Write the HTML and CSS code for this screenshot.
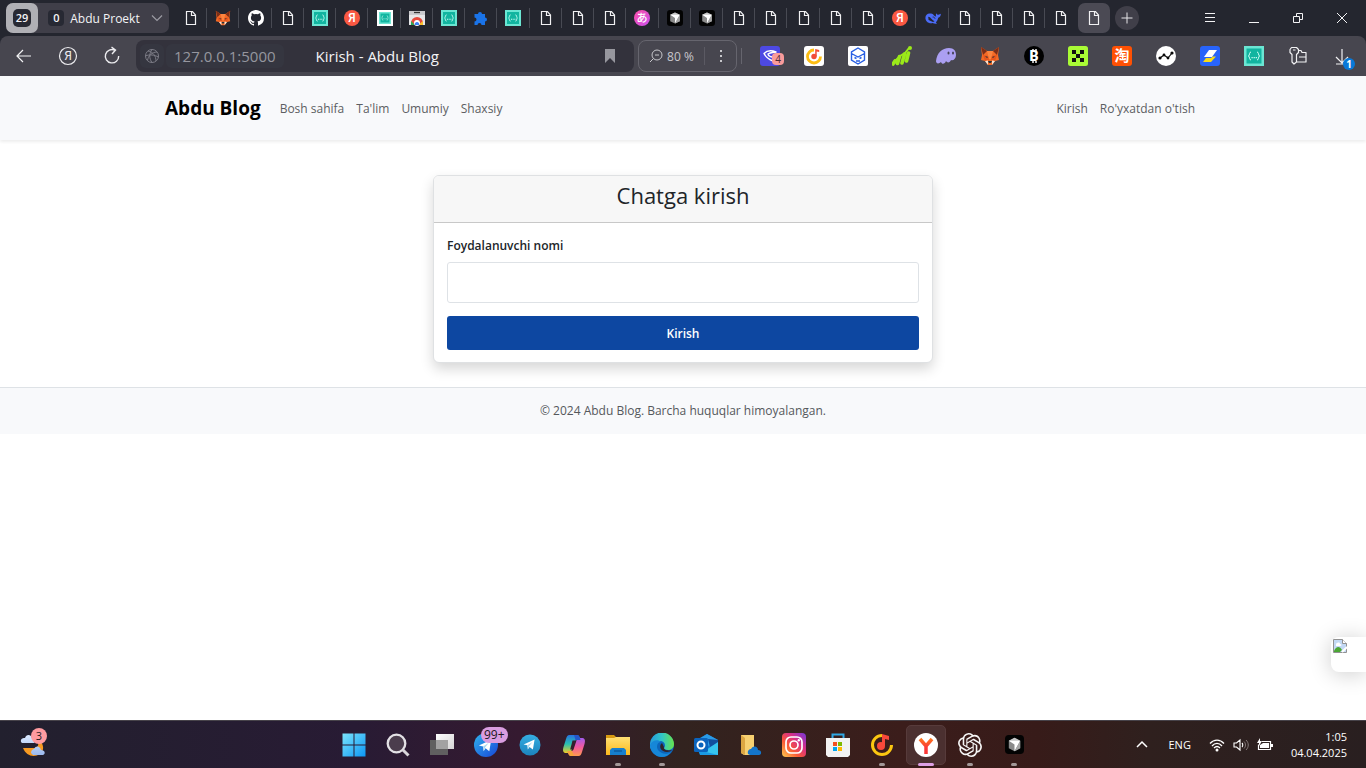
FILE: index.html
```html
<!DOCTYPE html>
<html lang="uz">
<head>
<meta charset="utf-8">
<meta name="viewport" content="width=device-width, initial-scale=1">
<title>Kirish - Abdu Blog</title>
<link rel="stylesheet" href="styles.css">
</head>
<body>
<svg class="sprite" aria-hidden="true">
  <defs>
    <linearGradient id="g-win" x1="0" y1="0" x2="1" y2="1"><stop offset="0" stop-color="#7be4fb"/><stop offset="1" stop-color="#0c97f5"/></linearGradient>
    <linearGradient id="g-lang" x1="0" y1="0" x2="1" y2="1"><stop offset="0" stop-color="#fb4fa5"/><stop offset="1" stop-color="#cb4ff0"/></linearGradient>
    <linearGradient id="g-tg" x1="0" y1="0" x2="0" y2="1"><stop offset="0" stop-color="#35aee2"/><stop offset="1" stop-color="#1c83bd"/></linearGradient>
    <linearGradient id="g-tg2" x1="0" y1="0" x2="1" y2="1"><stop offset="0" stop-color="#30b4ed"/><stop offset="1" stop-color="#1746d8"/></linearGradient>
    <linearGradient id="g-folder" x1="0" y1="0" x2="0" y2="1"><stop offset="0" stop-color="#ffe074"/><stop offset="1" stop-color="#fbb91c"/></linearGradient>
    <linearGradient id="g-edge" x1="0" y1="0" x2="1" y2="0"><stop offset="0" stop-color="#2599dc"/><stop offset=".5" stop-color="#31c6c7"/><stop offset="1" stop-color="#67e34b"/></linearGradient>
    <linearGradient id="g-ig" x1="0" y1="1" x2="1" y2="0"><stop offset="0" stop-color="#ffcf50"/><stop offset=".35" stop-color="#fa5a35"/><stop offset=".65" stop-color="#d82f85"/><stop offset="1" stop-color="#7138dd"/></linearGradient>
    <linearGradient id="g-cop1" x1="0" y1="0" x2="0" y2="1"><stop offset="0" stop-color="#2873e0"/><stop offset=".5" stop-color="#29c0b0"/><stop offset="1" stop-color="#efcf26"/></linearGradient>
    <linearGradient id="g-cop2" x1="0" y1="0" x2="0" y2="1"><stop offset="0" stop-color="#a35bec"/><stop offset=".5" stop-color="#f2599e"/><stop offset="1" stop-color="#ff9a4f"/></linearGradient>
    <linearGradient id="g-tv" x1="0" y1="0" x2="1" y2="1"><stop offset="0" stop-color="#fdfdfd"/><stop offset="1" stop-color="#d5d5d5"/></linearGradient>
    <linearGradient id="g-cloud" x1="0" y1="0" x2="0" y2="1"><stop offset="0" stop-color="#dceaff"/><stop offset="1" stop-color="#9ab8ed"/></linearGradient>
    <linearGradient id="g-y" gradientUnits="userSpaceOnUse" x1="0" y1="5" x2="0" y2="21"><stop offset="0" stop-color="#ff7a1c"/><stop offset=".6" stop-color="#fa3838"/></linearGradient>
  </defs>
  <symbol id="page" viewBox="0 0 16 16"><path d="M3.5 1.5h6l3 3.500v9.500h-9zM8.500 1.500v4h4" fill="none" stroke="#f1f1f3" stroke-width="1.200"/></symbol>
  <symbol id="fox" viewBox="0 0 20 20"><path d="M1 1l6 4h6l6-4-1 8 1 5-4 1-3 4H8l-3-4-4-1 1-5z" fill="#f36a26"/><path d="M1 1l6 4-4 4zM19 1l-6 4 4 4z" fill="#7b2e18"/><path d="M7 5h6l-2 8H9z" fill="#fb8540"/><path d="M3 9l5 1 1 4-4 1zM17 9l-5 1-1 4 4 1z" fill="#e8551b"/><path d="M5 10l3 1-1 1zM15 10l-3 1 1 1zM8 15h4l-1 2H9z" fill="#22313c"/><path d="M5 15l3-.5V19zM15 15l-3-.5V19z" fill="#f7e3d2"/></symbol>
  <symbol id="github" viewBox="0 0 16 16"><path fill="#fff" d="M8 0C3.580 0 0 3.580 0 8c0 3.540 2.290 6.530 5.470 7.590.4.070.55-.17.55-.38v-1.340c-2.230.48-2.690-1.070-2.690-1.070-.36-.92-.89-1.170-.89-1.170-.73-.5.050-.49.050-.49.8.060 1.230.83 1.230.83.72 1.220 1.870.87 2.330.66.070-.52.280-.87.500-1.070-1.770-.2-3.640-.89-3.640-3.950 0-.87.310-1.590.82-2.150-.08-.2-.36-1.020.08-2.120 0 0 .67-.21 2.200.82a7.600 7.600 0 0 1 4 0c1.530-1.040 2.200-.82 2.200-.82.44 1.100.16 1.920.08 2.120.51.56.82 1.270.82 2.150 0 3.070-1.870 3.750-3.650 3.950.29.25.54.73.54 1.480v2.200c0 .21.15.46.55.38A8 8 0 0 0 16 8c0-4.420-3.580-8-8-8z"/></symbol>
  <symbol id="braces" viewBox="0 0 20 20"><path fill="#6be6d3" d="M0 0h20v20H0z"/><path fill="#12b5a0" d="M2.500 2.500h15v15h-15z"/><path d="M7 6c-2 0-1 3-2.500 4C6 11 5 14 7 14M13 6c2 0 1 3 2.500 4-1.500 1-.5 4-2.500 4" fill="none" stroke="#d5fff7"/><path d="M7.500 11h1.200v1.200H7.500zM9.600 11h1.200v1.200H9.600zM11.700 11h1.200v1.200h-1.200z" fill="#d5fff7"/></symbol>
  <symbol id="braces-white" viewBox="0 0 16 16"><path fill="#fff" d="M0 0h16v16H0z"/><use href="#braces" x="2" y="2" width="12" height="12"/></symbol>
  <symbol id="webstore" viewBox="0 0 16 16"><path fill="#e6e6e8" d="M0 1h16v14H0z"/><path fill="#c9c9cd" d="M0 1h16v4H0z"/><path d="M5 2.500h6" stroke="#333" stroke-width="1.300"/><path d="M2 13a6 6 0 0 1 12 0v2H2z" fill="#e5483b"/><path d="M2 11l4 4H2z" fill="#2ca952"/><path d="M14 11v4h-5z" fill="#fac12c"/><circle cx="8" cy="13" r="3" fill="#fff"/><path d="M5.800 15a2.300 2.300 0 1 1 4.400 0z" fill="#3c82f6"/></symbol>
  <symbol id="puzzle" viewBox="0 0 16 16"><path fill="#1a73e8" d="M1.500 4H5a2 2 0 1 1 4 0h3v3.500a2 2 0 1 1 0 4V15H8.500a2 2 0 0 0-4 0h-3v-3.500a2 2 0 0 0 0-4z"/></symbol>
  <symbol id="cube" viewBox="0 0 20 20"><rect width="20" height="20" rx="4" fill="#030303"/><path d="M10 3l6 3v8l-6 3-6-3V6z" fill="#8a8a8a"/><path d="M4 6l6-3 6 3-6 1z" fill="#c6c6c6"/><path d="M4 6h12l-6 11v-7z" fill="#fff"/><path d="M16 6v8l-6 3z" fill="#a5a5a5"/></symbol>
  <symbol id="whale" viewBox="0 0 20 20"><path d="M.5 10c0-4 3-6 6-5.500 2-.8 3.500.5 4.500 2 1 1 2 1.500 3 1.500-.8-1.500-.5-3 .3-4 .5 1.200 1.200 2 2.500 2 1-.1 2-.8 3-1.200 0 2.800-1.300 4.500-3.300 5-.5 2.700-1.700 4.700-3 5.700l1.500 1.500c-2 .8-4 0-5.500-.7C5 17.500.500 14.500.500 10z" fill="#4b6cf7"/><path d="M4 8.500c3 0 5 4.500 8 5.500l-2 1c-2-.5-3.500-2-5.500-2.500z" fill="#24262f"/><path d="M9.500 8.800c1.500-.3 3 .7 3 2.200" stroke="#24262f" fill="none"/></symbol>
  <symbol id="gem" viewBox="0 0 20 20"><rect width="20" height="20" rx="3" fill="#4d49e3"/><path d="M16 6c-4-1.500-9-1.500-12 1.500 2 4 5 6 9 7.500 1-1 2-2 3-4-4 .5-8-.5-8-3 2-1.500 5-1.500 8-2z" fill="none" stroke="#fff" stroke-width="1.500" stroke-linejoin="round"/></symbol>
  <symbol id="music" viewBox="0 0 20 20"><rect width="20" height="20" rx="3" fill="#fff"/><path d="M10 4a6.500 6.500 0 1 0 6.500 6.500" fill="none" stroke="#fdbd13" stroke-width="2.800"/><circle cx="10" cy="10.500" r="2.700" fill="#f24c37"/><path d="M11.200 10V3l4 1v2l-2.500-.5v5z" fill="#f24c37"/></symbol>
  <symbol id="hex" viewBox="0 0 20 20"><rect width="20" height="20" rx="2" fill="#fff"/><path d="M10 2l6.500 3.800v8.400L10 18l-6.500-3.800V5.800zM3.500 7.500L10 11l6.500-3.500M6.500 11.500l2 1M13.500 11.500l-2 1M8 15h4" fill="none" stroke="#285fe4" stroke-width="1.400"/></symbol>
  <symbol id="bars" viewBox="0 0 20 20"><path d="M1 18l2-3M5.500 17.500l2-7M10 17l2.500-9M14.500 15l2-8" stroke="#9bea19" stroke-width="3.600" stroke-linecap="round"/><path d="M2 16l6-6 5-3 4-5" stroke="#9bea19" stroke-width="2" fill="none"/><circle cx="18" cy="2" r="2" fill="#9bea19"/></symbol>
  <symbol id="ghost" viewBox="0 0 20 20"><path d="M0 15C1 7 6 2 13 2c5 0 7 3 7 7s-3 6-5 5c-1 3-4 3-5 1-1 3-4 4-5 1-2 2-5 2-5-1z" fill="#ab9ff2"/><ellipse cx="12.500" cy="7" rx="1" ry="1.500" fill="#454257"/><ellipse cx="17" cy="7" rx="1" ry="1.500" fill="#454257"/></symbol>
  <symbol id="okx" viewBox="0 0 20 20"><rect width="20" height="20" rx="2.500" fill="#a9fb35"/><path d="M4 4h4v4H4zM12 4h4v4h-4zM8 8h4v4H8zM4 12h4v4H4zM12 12h4v4h-4z" fill="#111"/></symbol>
  <symbol id="nodes" viewBox="0 0 20 20"><circle cx="10" cy="10" r="10" fill="#fff"/><path d="M4 12l4-3 4 3 4-5" fill="none" stroke="#090909" stroke-width="1.200"/><g fill="#090909"><circle cx="4" cy="12" r="1.600"/><circle cx="8" cy="9" r="1.400"/><circle cx="12" cy="12" r="1.400"/><circle cx="16" cy="7" r="1.600"/></g></symbol>
  <symbol id="bolt" viewBox="0 0 20 20"><rect width="20" height="20" rx="3" fill="#2864fa"/><path d="M9 4h8l-5 7H4z" fill="#fff"/><path d="M12.500 10.500H16L11 16H3l3-4h5z" fill="#f6db18"/></symbol>
  <symbol id="key" viewBox="0 0 20 20"><path d="M3.500 1.500h5l2 2v3l-2 2V16L6 18l-2-2V8.500l-2-2v-3zM5 4h2.500M10.500 4.500H13l1 2h4v9.500H8.500M11 11h7" fill="none" stroke="#f1f1f3" stroke-width="1.200" stroke-linejoin="round"/></symbol>
  <symbol id="plane" viewBox="0 0 20 20"><path d="M3 10l13-6-2 12-4-3-2 3-.5-5z" fill="#fff"/><path d="M7.500 11l6-4-4 5-1 3z" fill="#a9d8ef"/></symbol>
</svg>

<div class="screen">
  <header class="browser">
    <div class="strip">
      <div class="group">
        <button class="count" aria-label="29 ta varaq"><span>29</span></button>
        <button class="project"><span class="zero">0</span>Abdu Proekt
          <svg class="caret" viewBox="0 0 12 8"><path d="M1 1.500l5 5 5-5" fill="none" stroke="#9b9ba3" stroke-width="1.200"/></svg></button>
      </div>
      <nav class="tabs" aria-label="Varaqlar">
        <button class="tab"><svg><use href="#page"/></svg></button>
        <button class="tab"><svg><use href="#fox"/></svg></button>
        <button class="tab"><svg><use href="#github"/></svg></button>
        <button class="tab"><svg><use href="#page"/></svg></button>
        <button class="tab"><svg><use href="#braces"/></svg></button>
        <button class="tab"><svg viewBox="0 0 16 16"><circle cx="8" cy="8" r="8" fill="#fa5842"/><text x="8" y="12" text-anchor="middle" class="glyph" font-size="12" fill="#fff">Я</text></svg></button>
        <button class="tab"><svg><use href="#braces-white"/></svg></button>
        <button class="tab"><svg><use href="#webstore"/></svg></button>
        <button class="tab"><svg><use href="#braces"/></svg></button>
        <button class="tab"><svg><use href="#puzzle"/></svg></button>
        <button class="tab"><svg><use href="#braces"/></svg></button>
        <button class="tab"><svg><use href="#page"/></svg></button>
        <button class="tab"><svg><use href="#page"/></svg></button>
        <button class="tab"><svg><use href="#page"/></svg></button>
        <button class="tab"><svg viewBox="0 0 16 16"><circle cx="8" cy="8" r="8" fill="url(#g-lang)"/><text x="8" y="12" text-anchor="middle" class="glyph" font-size="11" fill="#fff">あ</text></svg></button>
        <button class="tab"><svg><use href="#cube"/></svg></button>
        <button class="tab"><svg><use href="#cube"/></svg></button>
        <button class="tab"><svg><use href="#page"/></svg></button>
        <button class="tab"><svg><use href="#page"/></svg></button>
        <button class="tab"><svg><use href="#page"/></svg></button>
        <button class="tab"><svg><use href="#page"/></svg></button>
        <button class="tab"><svg><use href="#page"/></svg></button>
        <button class="tab"><svg viewBox="0 0 16 16"><circle cx="8" cy="8" r="8" fill="#fa5842"/><text x="8" y="12" text-anchor="middle" class="glyph" font-size="12" fill="#fff">Я</text></svg></button>
        <button class="tab"><svg><use href="#whale"/></svg></button>
        <button class="tab"><svg><use href="#page"/></svg></button>
        <button class="tab"><svg><use href="#page"/></svg></button>
        <button class="tab"><svg><use href="#page"/></svg></button>
        <button class="tab"><svg><use href="#page"/></svg></button>
        <button class="tab active"><svg><use href="#page"/></svg></button>
      </nav>
      <button class="newtab" aria-label="Yangi varaq"><svg viewBox="0 0 12 12"><path d="M6 .5v11M.5 6h11" stroke="#e6e6e9"/></svg></button>
      <div class="window">
        <button aria-label="Menyu"><svg viewBox="0 0 12 12"><path d="M1 1.500h10M1 5.500h10M1 9.500h10" stroke="#f3f3f5"/></svg></button>
        <button aria-label="Yig'ish"><svg viewBox="0 0 12 12"><path d="M1 10.500h10" stroke="#f3f3f5"/></svg></button>
        <button aria-label="Kichraytirish"><svg viewBox="0 0 12 12"><path d="M1.500 4.500h6v6h-6zM4.500 4.500v-3h6v6h-3" fill="none" stroke="#f3f3f5"/></svg></button>
        <button aria-label="Yopish"><svg viewBox="0 0 12 12"><path d="M1 1l10 10M11 1L1 11" stroke="#f3f3f5"/></svg></button>
      </div>
    </div>

    <div class="toolbar">
      <div class="tools">
        <button aria-label="Orqaga"><svg viewBox="0 0 20 20"><path d="M17 10H3.500M9 4l-6 6 6 6" fill="none" stroke="#f3f3f5" stroke-width="1.200"/></svg></button>
        <button aria-label="Yandex"><svg viewBox="0 0 20 20"><circle cx="10" cy="10" r="8.500" fill="none" stroke="#ececef" stroke-width="1.200"/><text x="10" y="14" text-anchor="middle" class="glyph light" font-size="12" fill="#ececef">Я</text></svg></button>
        <button aria-label="Yangilash"><svg viewBox="0 0 20 20"><path d="M13 4.200A6.700 6.700 0 1 0 16.700 10M9.500 1l4 3-3.500 4" fill="none" stroke="#ececef" stroke-width="1.400"/></svg></button>
      </div>
      <div class="address">
        <span class="site"><svg viewBox="0 0 16 16"><g fill="none" stroke="#7c7c86"><circle cx="8" cy="8" r="6.500"/><path d="M4 3c5 1 8 5 8 10M13 4C8 4 4 8 3.500 12.500M1.500 8c4-2 9-1 13 1M8 1.500c-3 4-3 9 0 13"/></g></svg></span>
        <span class="host">127.0.0.1:5000</span>
        <span class="title">Kirish - Abdu Blog</span>
        <button class="mark" aria-label="Saqlash"><svg viewBox="0 0 12 14"><path d="M1 0h10v14l-5-5-5 5z" fill="#97979e"/></svg></button>
      </div>
      <div class="zoom">
        <button class="level"><svg viewBox="0 0 14 14"><circle cx="8" cy="6" r="5" fill="none" stroke="#c7c7cb"/><path d="M4.500 9.500L1 13M6 6h4" stroke="#c7c7cb"/></svg>80 %</button>
        <button class="more" aria-label="Yana"><svg viewBox="0 0 4 14"><path d="M1 1h2v2H1zM1 6h2v2H1zM1 11h2v2H1z" fill="#c7c7cb"/></svg></button>
      </div>
      <div class="extensions">
        <button><svg><use href="#gem"/></svg><span class="tip">4</span></button>
        <button><svg><use href="#music"/></svg></button>
        <button><svg><use href="#hex"/></svg></button>
        <button><svg><use href="#bars"/></svg></button>
        <button><svg><use href="#ghost"/></svg></button>
        <button><svg><use href="#fox"/></svg></button>
        <button><svg viewBox="0 0 20 20"><circle cx="10" cy="10" r="10" fill="#000"/><text x="10" y="15" text-anchor="middle" class="glyph heavy" font-size="14" fill="#fff">B</text><path d="M9 3v2M12 3v2M9 15v2M12 15v2" stroke="#fff" stroke-width="1.400"/></svg></button>
        <button><svg><use href="#okx"/></svg></button>
        <button><svg viewBox="0 0 20 20"><rect width="20" height="20" rx="3" fill="#ff5104"/><text x="10" y="15" text-anchor="middle" class="glyph cjk" font-size="15" fill="#fff">淘</text></svg></button>
        <button><svg><use href="#nodes"/></svg></button>
        <button><svg><use href="#bolt"/></svg></button>
        <button><svg><use href="#braces"/></svg></button>
        <button><svg><use href="#key"/></svg></button>
        <button><svg viewBox="0 0 20 20"><path d="M10 3v14M4 11l6 6 6-6M4 18h8" fill="none" stroke="#f1f1f3" stroke-width="1.200"/></svg><span class="tip blue">1</span></button>
      </div>
    </div>
  </header>

  <div class="viewport">
    <nav class="navbar">
      <div class="container">
        <a class="brand" href="#">Abdu Blog</a>
        <div class="links"><a href="#">Bosh sahifa</a><a href="#">Ta'lim</a><a href="#">Umumiy</a><a href="#">Shaxsiy</a></div>
        <div class="links end"><a href="#">Kirish</a><a href="#">Ro'yxatdan o'tish</a></div>
      </div>
    </nav>
    <main class="main">
      <section class="card">
        <h1 class="card-title">Chatga kirish</h1>
        <form class="card-body">
          <label for="username">Foydalanuvchi nomi</label>
          <input id="username" type="text" name="username">
          <button type="button" class="submit">Kirish</button>
        </form>
      </section>
    </main>
    <footer class="footer">© 2024 Abdu Blog. Barcha huquqlar himoyalangan.</footer>
    <div class="widget"><svg viewBox="0 0 14 14"><path d="M.5.500h9l4 4v9H.500z" fill="#c3d9f5" stroke="#929292"/><path d="M9.500.500v4h4" fill="#fff" stroke="#929292"/><path d="M3 6c0-3 4-3 4-1 2 0 2 2 0 2H3z" fill="#fff"/><path d="M1 12c2-5 6-5 8-1l-2 2H1z" fill="#4ba735"/><path d="M14 8l-5 5" stroke="#fff" stroke-width="2"/></svg></div>
  </div>

  <footer class="taskbar">
    <div class="weather">
      <svg viewBox="0 0 26 24"><path d="M3 15h11c5 0 5-5 3-8 7 2 8 10 3 14-6 4-14 2-17-6z" fill="#f79a22"/><path d="M1 9c-1-4 3-4 4-4 1-4 6-4 7 0 4 0 4 4 2 5H2zM11 20c0-3 2-4 3-4 2-4 6-3 7 1 4 0 5 4 2 5H13z" fill="url(#g-cloud)"/></svg>
      <span class="alert">3</span>
    </div>
    <div class="apps">
      <button aria-label="Windows"><svg viewBox="0 0 24 24"><path d="M.5.500h11v11H.500zM12.500.500h11v11h-11zM.500 12.500h11v11H.500zM12.500 12.500h11v11h-11z" fill="url(#g-win)"/></svg></button>
      <button aria-label="Qidiruv"><svg viewBox="0 0 24 24"><circle cx="10.500" cy="10.500" r="8.800" fill="#4b3d4d" stroke="#e3e1e5" stroke-width="2.300"/><path d="M17 17l5.500 5.500" stroke="#d9d6db" stroke-width="3"/></svg></button>
      <button aria-label="Vazifalar"><svg viewBox="0 0 24 24"><path d="M6 1h18v15H6z" fill="url(#g-tv)"/><path d="M0 7h18v15H0z" fill="#606060"/><path d="M6 7h12v9H6z" fill="#a2a2a2"/></svg></button>
      <button aria-label="Telegram"><svg viewBox="0 0 24 24"><circle cx="12" cy="12" r="12" fill="url(#g-tg2)"/><use href="#plane" x="2" y="3" width="19" height="19"/></svg><span class="unread">99+</span></button>
      <button aria-label="Telegram"><svg viewBox="0 0 24 24"><circle cx="12" cy="12" r="10.500" fill="url(#g-tg)"/><use href="#plane" x="3" y="3" width="17" height="17"/></svg></button>
      <button aria-label="Copilot"><svg viewBox="0 0 24 24"><path d="M7.500 2H15c2 0 2.500 1.500 3.500 5H15c-2 0-2.500 1-3 3l-2 6c-.7 2.500-1.500 4-4 4H4c-3 0-3.500-2.500-2.500-6L4 6c.8-2.500 1.500-4 3.500-4z" fill="url(#g-cop1)"/><path d="M16.500 23H9c-2 0-2.500-1.500-3.500-5H9c2 0 2.500-1 3-3l2-6c.7-2.500 1.500-4 4-4h2c3 0 3.500 2.500 2.500 6L20 19c-.8 2.500-1.500 4-3.500 4z" fill="url(#g-cop2)"/><path d="M10.500 7.500h2.700l-2.300 9H8.200z" fill="#35202d"/><path d="M12 2h3c2 0 2.500 1.500 3.500 5h-5z" fill="#2456ca"/><path d="M5.500 18H10l2 5H9c-2 0-2.500-1.500-3.500-5z" fill="#f5a33a"/></svg></button>
      <button aria-label="Fayllar" class="run"><svg viewBox="0 0 24 24"><path d="M0 2h8l3 3v5H0z" fill="#d79a11"/><path d="M0 5h8l2-1h14v18H0z" fill="url(#g-folder)"/><path d="M4 22v-5l2-2h12l2 2v5z" fill="#167fce"/><path d="M8 18h8" stroke="#0c5ba1" stroke-width="1.500"/></svg></button>
      <button aria-label="Edge" class="run"><svg viewBox="0 0 24 24"><circle cx="12" cy="12" r="12" fill="#0c65bb"/><path d="M0 12a12 12 0 0 1 24-1c0 4-3 6-6 6-3 0-4-1-4-2 2-2 1-7-4-7C5 8 2 12 0 16z" fill="url(#g-edge)"/><path d="M0 12c2-5 8-6 11-3-4 0-5 5-3 8 3 4 9 5 13 2-2 3-6 5-9 5C5 24 0 18 0 12z" fill="#1687d8"/><path d="M12 10c-4 3-1 9 5 9 2 0 4-1 5-2-4 1-9 0-8-3z" fill="#30242a"/></svg></button>
      <button aria-label="Outlook"><svg viewBox="0 0 24 24"><path d="M4 6l9-5 11 6v15H6z" fill="#1478cf"/><path d="M5 6l8-5 11 6-9 6z" fill="#2a9be6"/><path d="M14 6l10 1v3l-8 4z" fill="#124f9e"/><path d="M24 9v13H6l9-7z" fill="#36c5ef"/><path d="M4 17l20 5H6z" fill="#1a9ae4"/><rect y="5" width="14" height="14" rx="1.500" fill="#0b64bd"/><circle cx="7" cy="12" r="3.500" fill="none" stroke="#fff" stroke-width="2"/></svg></button>
      <button aria-label="OneDrive"><svg viewBox="0 0 24 24"><path d="M3 2h13v20H6l-3-2z" fill="#f7d071"/><path d="M3 2l4 3v17l-4-2z" fill="#dca642"/><path d="M10 21c-1-4 2-5 3-5 2-4 7-3 7 1 4 0 4 5 1 5H12z" fill="#1475cb"/></svg></button>
      <button aria-label="Instagram"><svg viewBox="0 0 24 24"><rect width="24" height="24" rx="4" fill="url(#g-ig)"/><rect x="4" y="4" width="16" height="16" rx="5" fill="none" stroke="#fff" stroke-width="1.700"/><circle cx="12" cy="12" r="4" fill="none" stroke="#fff" stroke-width="1.700"/><circle cx="16.800" cy="7.200" r="1.200" fill="#fff"/></svg></button>
      <button aria-label="Store"><svg viewBox="0 0 24 24"><path d="M6.500 7V1.500h11V7" fill="none" stroke="#31a9e6" stroke-width="2"/><path d="M0 5h24v17l-2 2H2l-2-2z" fill="#f2f2f2"/><path d="M7 9h4v4H7z" fill="#f25022"/><path d="M12 9h4v4h-4z" fill="#7fba00"/><path d="M7 14h4v4H7z" fill="#00a4ef"/><path d="M12 14h4v4h-4z" fill="#ffb900"/></svg></button>
      <button aria-label="Musiqa" class="run"><svg viewBox="0 0 24 24"><path d="M12 2.500a9.500 9.500 0 1 0 9.500 9.500" fill="none" stroke="#fbc711" stroke-width="3"/><circle cx="11" cy="13" r="4" fill="#f8493b"/><path d="M12 13V1l7 2v4l-4-1v7z" fill="#f8493b"/></svg></button>
      <button aria-label="Yandex" class="run current"><svg viewBox="0 0 24 24"><circle cx="12" cy="12" r="12" fill="#fff"/><path d="M6 6l6 7 6-7M12 12v9" fill="none" stroke="url(#g-y)" stroke-width="3.500"/></svg></button>
      <button aria-label="ChatGPT" class="run"><svg viewBox="0 0 24 24"><path fill="#f6f6f6" d="M22.2819 9.8211a5.9847 5.9847 0 0 0-.5157-4.9108 6.0462 6.0462 0 0 0-6.5098-2.9A6.0651 6.0651 0 0 0 4.9807 4.1818a5.9847 5.9847 0 0 0-3.9977 2.9 6.0462 6.0462 0 0 0 .7427 7.0966 5.98 5.98 0 0 0 .511 4.9107 6.051 6.051 0 0 0 6.5146 2.9001A5.9847 5.9847 0 0 0 13.2599 24a6.0557 6.0557 0 0 0 5.7718-4.2058 5.9894 5.9894 0 0 0 3.9977-2.9001 6.0557 6.0557 0 0 0-.7475-7.0729zm-9.022 12.6081a4.4755 4.4755 0 0 1-2.8764-1.0408l.1419-.0804 4.7783-2.7582a.7948.7948 0 0 0 .3927-.6813v-6.7369l2.02 1.1686a.071.071 0 0 1 .038.052v5.5826a4.504 4.504 0 0 1-4.4945 4.4944zm-9.6607-4.1254a4.4708 4.4708 0 0 1-.5346-3.0137l.142.0852 4.783 2.7582a.7712.7712 0 0 0 .7806 0l5.8428-3.3685v2.3324a.0804.0804 0 0 1-.0332.0615L9.74 19.9502a4.4992 4.4992 0 0 1-6.1408-1.6464zM2.3408 7.8956a4.485 4.485 0 0 1 2.3655-1.9728V11.6a.7664.7664 0 0 0 .3879.6765l5.8144 3.3543-2.0201 1.1685a.0757.0757 0 0 1-.071 0l-4.8303-2.7865A4.504 4.504 0 0 1 2.3408 7.872zm16.5963 3.8558L13.1038 8.364 15.1192 7.2a.0757.0757 0 0 1 .071 0l4.8303 2.7913a4.4944 4.4944 0 0 1-.6765 8.1042v-5.6772a.79.79 0 0 0-.407-.667zm2.0107-3.0231l-.142-.0852-4.7735-2.7818a.7759.7759 0 0 0-.7854 0L9.409 9.2297V6.8974a.0662.0662 0 0 1 .0284-.0615l4.8303-2.7866a4.4992 4.4992 0 0 1 6.6802 4.66zM8.3065 12.863l-2.02-1.1638a.0804.0804 0 0 1-.038-.0567V6.0742a4.4992 4.4992 0 0 1 7.3757-3.4537l-.142.0805L8.704 5.459a.7948.7948 0 0 0-.3927.6813zm1.0976-2.3654l2.602-1.4998 2.6069 1.4998v2.9994l-2.5974 1.4997-2.6067-1.4997z"/></svg></button>
      <button aria-label="Cursor" class="run"><svg class="small"><use href="#cube"/></svg></button>
    </div>
    <div class="tray">
      <button aria-label="Yashirin belgilar"><svg viewBox="0 0 16 16"><path d="M3 10l5-5 5 5" fill="none" stroke="#fff" stroke-width="1.500"/></svg></button>
      <button class="lang">ENG</button>
      <button class="status" aria-label="Holat">
        <svg viewBox="0 0 16 16"><g fill="none" stroke="#fff" stroke-width="1.300"><path d="M1 6.500c4-4.500 10-4.500 14 0M3 9c3-3.500 7-3.500 10 0M5 11c2-2 4-2 6 0"/></g><circle cx="8" cy="13" r="1.500" fill="#fff"/></svg>
        <svg viewBox="0 0 16 16"><path d="M1 6h2.500L7 3v10l-3.500-3H1zM9 6c1 1 1 3 0 4" fill="none" stroke="#fff" stroke-width="1.100"/><path d="M11 4.500c2 2 2 5 0 7M13 3c3 3 3 7 0 10" fill="none" stroke="#867b7b"/></svg>
        <svg viewBox="0 0 16 16"><path d="M5 4.500h8.500v8H1.500v-5" fill="none" stroke="#fff" stroke-width="1.200"/><path d="M3 11V8l3-2h6v5z" fill="#fff"/><path d="M14 7h2v3h-2zM3 1L0 6h2v3l3-5H3z" fill="#fff"/></svg>
      </button>
      <button class="clock"><span>1:05</span><span>04.04.2025</span></button>
    </div>
  </footer>
</div>
</body>
</html>
```
FILE: styles.css
```css
* { box-sizing: border-box; }
body { margin: 0; font-family: "Open Sans", "Noto Sans", "Noto Sans CJK SC", sans-serif; font-size: 12px; color: #212529; background: #fff; }
button { border: 0; padding: 0; margin: 0; background: none; color: inherit; font: inherit; display: flex; align-items: center; justify-content: center; position: relative; }
a { color: inherit; text-decoration: none; }
svg { display: block; flex: none; }
.sprite { position: absolute; width: 0; height: 0; }
.glyph { font-family: Roboto, "Noto Sans CJK JP", sans-serif; font-weight: 500; }
.glyph.light { font-weight: 400; }
.glyph.heavy { font-weight: 900; }
.glyph.cjk { font-family: "Noto Sans CJK SC", sans-serif; font-weight: 700; }
.screen { min-height: 100vh; display: flex; flex-direction: column; }

/* Browser chrome */
.browser { background: #24262f; color: #f4f4f6; }
.strip { height: 36px; display: flex; align-items: center; padding: 0 2px 0 6px; }
.group { height: 30px; width: 163px; display: flex; background: #403f49; border-radius: 7px; margin-right: 6px; }
.count { width: 32px; background: #b0b0b5; border-radius: 7px; }
.count span { width: 18px; height: 18px; line-height: 18px; border-radius: 5px; background: #272933; font-size: 11px; font-weight: 600; }
.project { flex: 1; gap: 6px; padding-left: 4px; white-space: nowrap; }
.zero { width: 16px; height: 16px; line-height: 16px; border-radius: 4px; background: #272933; font-size: 11px; font-weight: 600; }
.caret { width: 12px; height: 8px; margin-left: 5px; }
.tabs { flex: 1; display: flex; height: 30px; }
.tab { flex: 1; }
.tab svg { width: 16px; height: 16px; }
.tab:not(.active):not(:nth-last-child(2))::after { content: ""; position: absolute; right: 0; top: 5px; width: 1px; height: 20px; background: #484a53; }
.tab.active { background: #4b4a54; border-radius: 7px; }
.newtab { width: 24px; height: 24px; border-radius: 50%; background: #403f49; margin: 0 49px 0 5px; }
.newtab svg, .window svg { width: 12px; height: 12px; }
.window { display: flex; }
.window button { width: 44px; height: 36px; }
.toolbar { height: 40px; display: flex; align-items: center; padding: 0 2px; background: #47464f; border-radius: 8px 8px 0 0; }
.tools, .extensions { display: flex; }
.tools button, .extensions button { width: 44px; height: 40px; }
.tools svg, .extensions svg { width: 20px; height: 20px; }
.address { flex: 1; min-width: 0; height: 32px; margin: 0 4px 0 2px; padding: 0 18px 0 4px; display: flex; align-items: center; background: #33323c; border-radius: 8px; font-size: 15px; white-space: nowrap; }
.site { width: 24px; height: 24px; display: grid; place-items: center; background: #353640; border-radius: 6px; }
.site svg { width: 16px; height: 16px; }
.host { padding: 0 8px; height: 24px; line-height: 24px; margin: 0 32px 0 2px; background: #353640; border-radius: 6px; color: #96969f; }
.title { flex: 1; }
.mark svg { width: 12px; height: 14px; }
.zoom { width: 99px; height: 32px; display: flex; align-items: center; border: 1px solid #66656e; border-radius: 8px; color: #c7c7cb; margin-right: 4px; }
.level { flex: 1; gap: 4px; border-right: 1px solid #5b5a63; height: 18px; white-space: nowrap; }
.level svg { width: 14px; height: 14px; }
.more { width: 31px; }
.more svg { width: 4px; height: 14px; }
.extensions { border-left: 1px solid #66656e; height: 16px; align-items: center; padding-left: 6px; }
.tip { position: absolute; right: 8px; bottom: 11px; width: 12px; height: 12px; border-radius: 4px; background: #f99b9b; color: #512a31; font-size: 10px; line-height: 12px; }
.tip.blue { right: 9px; bottom: 6px; border-radius: 50%; background: #0878d8; color: #fff; font-weight: 700; }

/* Site */
.viewport { flex: 1; position: relative; overflow: hidden; background: #fff; }
.navbar { background: #f8f9fb; box-shadow: 0 2px 3px rgba(0,0,0,.07); }
.container { max-width: 1056px; min-height: 64px; margin: 0 auto; padding: 0 10px; display: flex; align-items: center; color: #5c5e62; }
.brand { color: #000; font-size: 19px; font-weight: 700; margin-right: 13px; }
.links { display: flex; }
.links a { padding: 6px; }
.links.end { margin-left: auto; }
.main { padding: 35px 16px 24px; }
.card { max-width: 500px; margin: 0 auto; border: 1px solid #dfe1e3; border-radius: 6px; box-shadow: 0 6px 13px rgba(0,0,0,.16); background: #fff; overflow: hidden; }
.card-title { margin: 0; padding: 6px 13px 13px; font-size: 22px; line-height: 27px; font-weight: 500; text-align: center; background: #f7f7f7; border-bottom: 1px solid #c8c8c8; }
.card-body { display: flex; flex-direction: column; padding: 13px 13px 12px; }
.card-body label { font-weight: 600; line-height: 20px; margin-bottom: 6px; }
.card-body input { height: 41px; width: 100%; padding: 8px; border: 1px solid #dee2e6; border-radius: 3px; font: inherit; margin-bottom: 13px; }
.submit { height: 34px; border-radius: 3px; background: #0d47a1; color: #fff; font-weight: 600; }
.footer { border-top: 1px solid #dee2e6; background: #f8f9fb; padding: 13px; line-height: 20px; text-align: center; color: #55585c; }
.widget { position: absolute; right: 0; bottom: 48px; width: 35px; height: 35px; padding: 2px; background: #fff; border-radius: 8px 0 0 8px; box-shadow: 0 2px 22px rgba(0,0,0,.2); }
.widget svg { width: 14px; height: 14px; }

/* Taskbar */
.taskbar { height: 48px; display: grid; grid-template-columns: 1fr auto 1fr; align-items: center; padding-left: 2px; border-top: 1px solid #47434a; color: #fff; background: linear-gradient(90deg, #22202e, #281b34 26%, #351a30 38%, #32231f 50%, #3b1d1b 66%, #371b19 76%, #2f201e 84%, #291f20); }
.weather { position: relative; width: 26px; margin-left: 18px; }
.weather svg { width: 26px; height: 24px; }
.alert { position: absolute; top: -5px; right: -1px; width: 16px; height: 16px; border-radius: 50%; background: #ff9ba0; color: #241c24; font-size: 11px; line-height: 16px; text-align: center; }
.apps { display: flex; }
.apps button { width: 44px; height: 46px; }
.apps svg { width: 24px; height: 24px; }
.apps svg.small { width: 19px; height: 19px; }
.unread { position: absolute; top: 5px; left: 17px; padding: 0 3px; height: 16px; border-radius: 8px; background: #d99de0; color: #201821; font-size: 12px; line-height: 16px; }
.run::after { content: ""; position: absolute; bottom: 2px; left: 19px; width: 6px; height: 3px; border-radius: 2px; background: #a39898; }
.run.current::before { content: ""; position: absolute; inset: 3px 2px; border: 1px solid #573b3b; border-radius: 5px; background: #4b3030; }
.run.current svg { position: relative; }
.run.current::after { left: 14px; width: 16px; background: #dda0e5; }
.tray { justify-self: end; display: flex; align-items: center; padding-right: 19px; }
.tray svg { width: 16px; height: 16px; }
.lang { margin-left: 18px; font-size: 11px; }
.status { gap: 8px; margin-left: 18px; }
.clock { flex-direction: column; align-items: flex-end; margin-left: 18px; font-size: 11px; line-height: 16px; }
```
